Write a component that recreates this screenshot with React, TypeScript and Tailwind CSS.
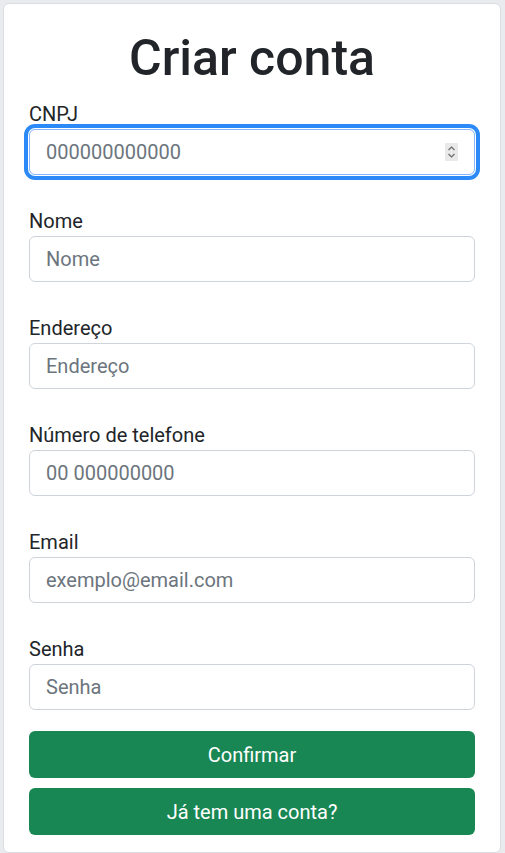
import React from "react";

const FIELDS: { label: string; placeholder: string; type: string }[] = [
  { label: "Nome", placeholder: "Nome", type: "text" },
  { label: "Endereço", placeholder: "Endereço", type: "text" },
  { label: "Número de telefone", placeholder: "00 000000000", type: "tel" },
  { label: "Email", placeholder: "exemplo@email.com", type: "email" },
  { label: "Senha", placeholder: "Senha", type: "password" },
];

const inputClass =
  "block w-full h-[46px] px-4 rounded-md border border-[#ced4da] bg-white text-[20px] text-[#212529] placeholder:text-[#6c757d] outline-none";

function Spinner() {
  return (
    <div className="absolute right-[17px] top-1/2 -translate-y-1/2 w-[13px] h-[18px] bg-[#e9e9e9] flex items-center justify-center">
      <svg width="9" height="14" viewBox="0 0 9 14" fill="none">
        <path d="M1.5 5 4.5 2 7.5 5" stroke="#6b6b6b" strokeWidth="1.2" />
        <path d="M1.5 9 4.5 12 7.5 9" stroke="#6b6b6b" strokeWidth="1.2" />
      </svg>
    </div>
  );
}

export default function App() {
  return (
    <div
      className="min-h-[853px] bg-[#e9ebee] pt-[3px] pl-[3px] pr-[4px]"
      style={{ fontFamily: "Roboto, 'Liberation Sans', sans-serif" }}
    >
      <div className="min-h-[850px] bg-white border border-[#dadde1] rounded-md px-[25px] pt-[24px]">
        <h1 className="text-center text-[50px] leading-[60px] font-medium text-[#212529] mb-[11px]">
          Criar conta
        </h1>

        {/* CNPJ field shown focused */}
        <div className="mb-[31px]">
          <label className="block text-[20px] leading-[30px] text-[#212529]">
            CNPJ
          </label>
          <div className="relative">
            <input
              type="text"
              placeholder="000000000000"
              className="block w-full h-[46px] px-4 rounded-md border border-[#86b7fe] bg-white text-[20px] text-[#212529] placeholder:text-[#6c757d] outline-none shadow-[0_0_0_1px_#fff,0_0_0_5px_#2b8af7]"
            />
            <Spinner />
          </div>
        </div>

        {FIELDS.map((f, i) => (
          <div
            key={f.label}
            className={i === FIELDS.length - 1 ? "mb-[21px]" : "mb-[31px]"}
          >
            <label className="block text-[20px] leading-[30px] text-[#212529]">
              {f.label}
            </label>
            <input type={f.type} placeholder={f.placeholder} className={inputClass} />
          </div>
        ))}

        <div className="flex flex-col gap-[10px]">
          <button
            type="button"
            className="h-[47px] w-full rounded-md bg-[#198754] text-white text-[20px]"
          >
            Confirmar
          </button>
          <button
            type="button"
            className="h-[47px] w-full rounded-md bg-[#198754] text-white text-[20px]"
          >
            Já tem uma conta?
          </button>
        </div>
      </div>
    </div>
  );
}
